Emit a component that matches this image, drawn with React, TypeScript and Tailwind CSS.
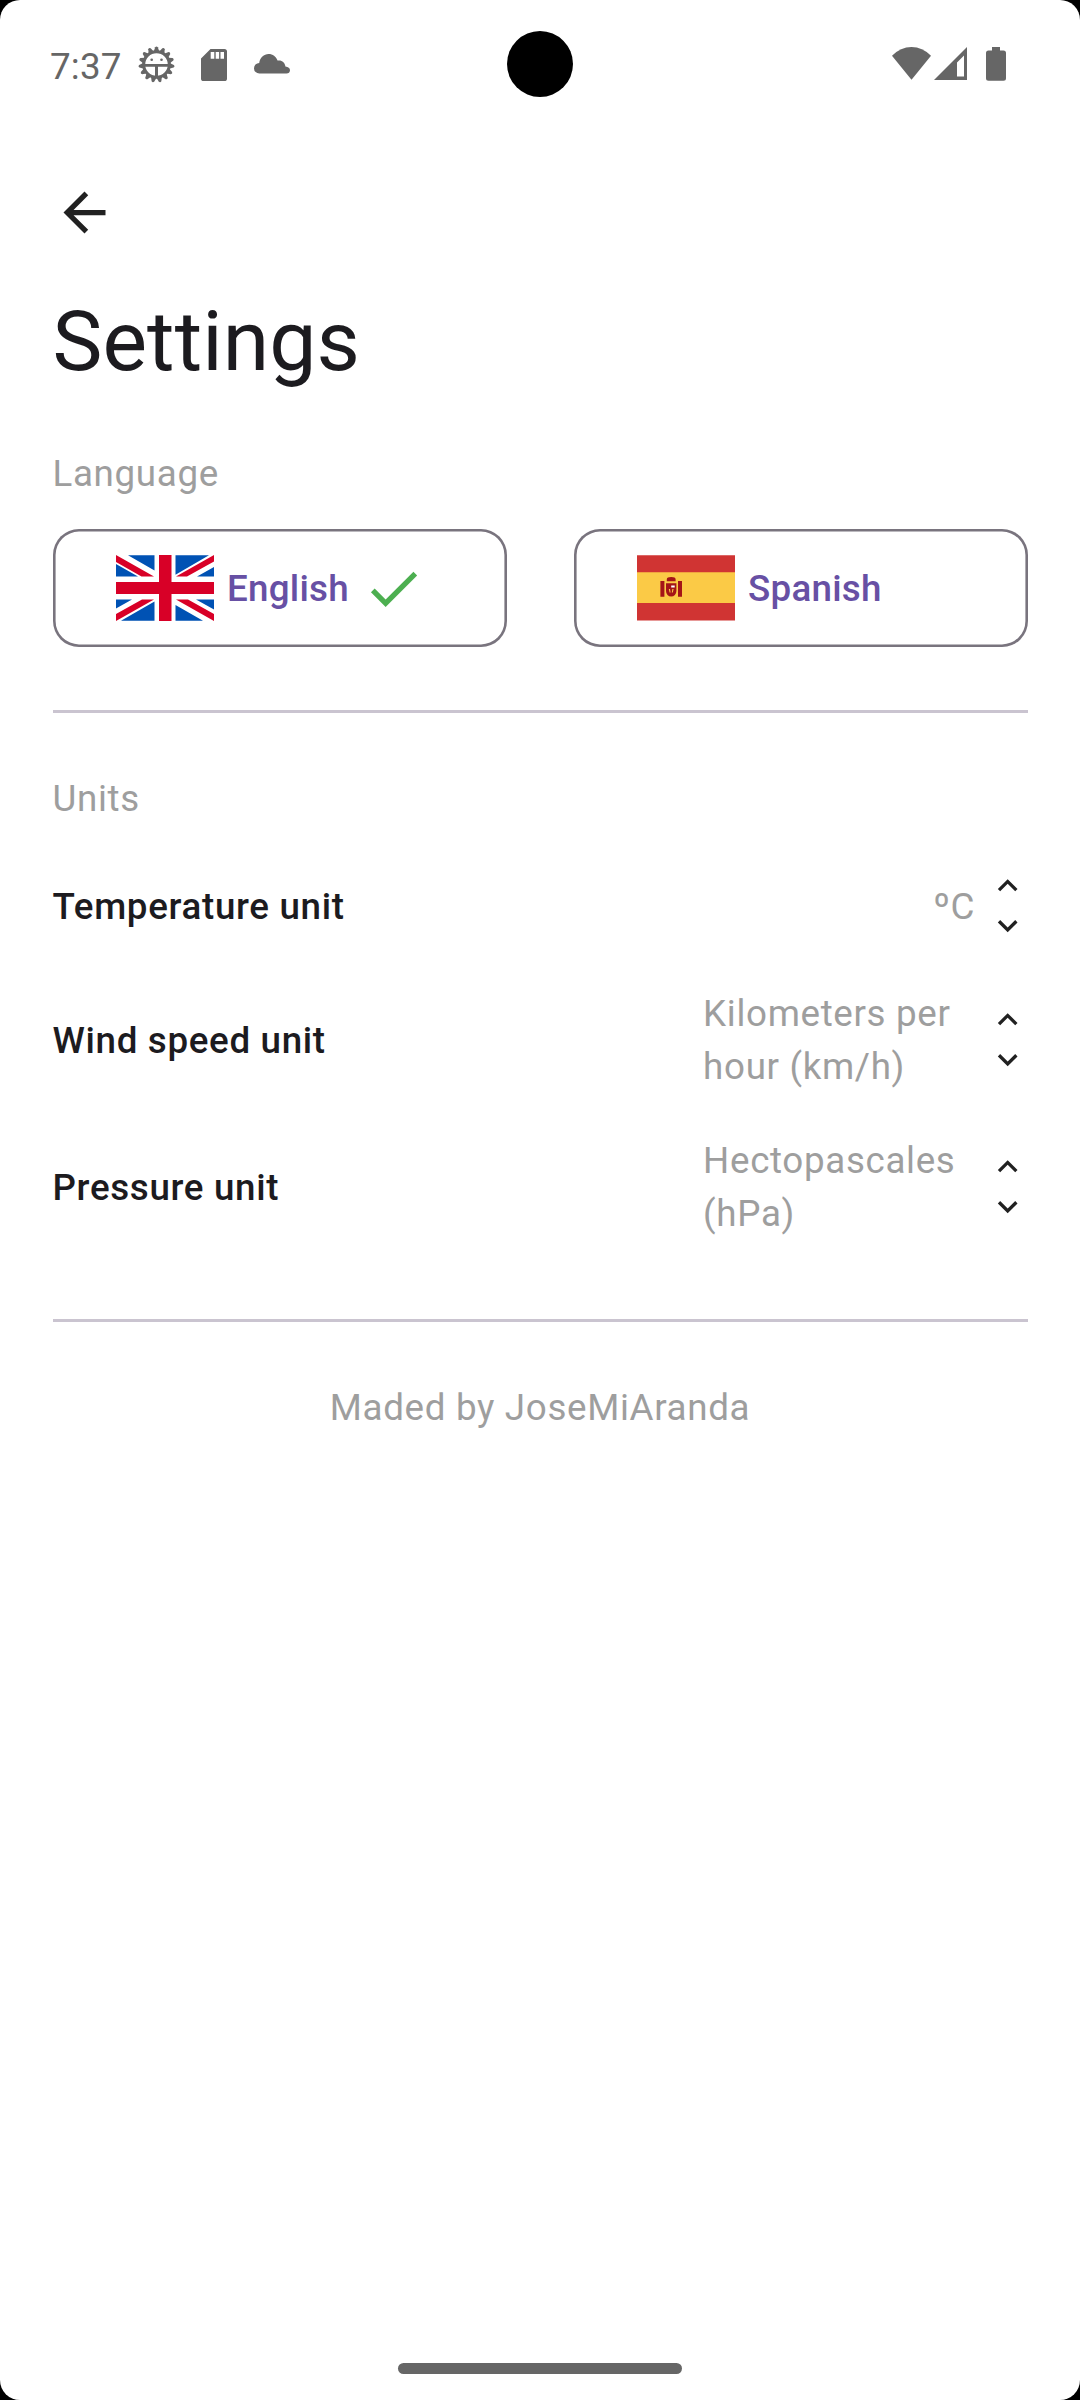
import type { ReactNode } from 'react';

const GREY = '#666666';

function GearIcon() {
  const teeth = Array.from({ length: 15 }, (_, i) => (i * 360) / 15 + 180);
  return (
    <svg className="h-[37px] w-[37px]" viewBox="-18.5 -18.5 37 37" fill={GREY}>
      {teeth.map((a) => (
        <path key={a} d="M-2.8 13L-1.3 17.3Q0 18.8 1.3 17.3L2.8 13z" transform={`rotate(${a})`} />
      ))}
      <circle r="12.8" fill="none" stroke={GREY} strokeWidth="3" />
      <path d="M-12.5 -.6h25v2.8h-25zM-1.5 0h3v12.5h-3z" />
      <circle cx="-4.8" cy="-4.8" r="1.3" />
      <circle cx="5" cy="-4.8" r="1.3" />
    </svg>
  );
}

function StatusBar() {
  return (
    <header className="flex h-[130px] items-start justify-between">
      <div className="flex items-start">
        <span className="ml-[50px] mt-[41px] w-[88px] text-[36.75px] leading-[52.5px] tracking-[0.2px] text-[#666666]">7:37</span>
        <div className="mt-[46px] flex">
          <GearIcon />
          <svg className="ml-[26px] mt-[3px] h-[32px] w-[26px]" viewBox="0 0 26 32" fill={GREY}>
            <path
              fillRule="evenodd"
              d="M9.5 0H23.4A2.6 2.6 0 0 1 26 2.6V29.4A2.6 2.6 0 0 1 23.4 32H2.6A2.6 2.6 0 0 1 0 29.4V9.5zM9.7 3v6.8h3.6V3zM14.7 3v6.8h3.4V3zM19.5 3v6.8h3.5V3z"
            />
          </svg>
          <svg className="ml-[27px] mt-[7.5px] h-[20px] w-[36px]" viewBox="0 0 36 20" fill={GREY}>
            <path d="M5.4 19.6A5.3 5.3 0 0 1 5.2 9C6 3.6 9.8 0 14.6 0C18.8 0 22 2.4 23.5 6.6C27.6 5.7 31 8.4 31.4 12.6C34.3 12.8 36 14.3 36 16.3C36 18.3 34.5 19.6 32.5 19.6z" />
          </svg>
        </div>
      </div>
      <div className="mr-[74px] mt-[47px] flex">
        <svg className="h-[33px] w-[39px]" viewBox="0 0 39 33" fill={GREY}>
          <path d="M19.5 32.8L0 8.8Q8.5 0 19.5 0T39 8.8z" />
        </svg>
        <svg className="ml-[3px] h-[33px] w-[33px]" viewBox="0 0 33 33" fill={GREY}>
          <path fillRule="evenodd" d="M33 0V33H0zM30 8.5L23 15.5V29.5H30z" />
        </svg>
        <svg className="ml-[19px] h-[34px] w-[20px]" viewBox="0 0 20 34" fill={GREY}>
          <path d="M6 0h8v3.5h3.5A2.5 2.5 0 0 1 20 6V31.3A2.5 2.5 0 0 1 17.5 33.8H2.5A2.5 2.5 0 0 1 0 31.3V6A2.5 2.5 0 0 1 2.5 3.5H6z" />
        </svg>
      </div>
    </header>
  );
}

function FlagUK() {
  return (
    <svg className="h-[66px] w-[98px]" viewBox="0 0 98 66">
      <path fill="#fff" d="M0 0H98V66H0z" />
      <path
        fill="#0052b4"
        d="M12 .3H38.5V15.5zM59.5 .3H93L59.5 19.8zM98 12V21.5H81zM0 9L22 21.5H0zM0 44.5H16L0 53.5zM38.5 46.5V65.7H5zM59.5 50L87 65.7H59.5zM80 44.5H98V54.5z"
      />
      <path
        fill="#d80027"
        d="M43 0H55.5V27H98V39H55.5V66H43V39H0V27H43zM0 0L38 21.5H25.5L0 7zM98 0V6.5L71 21.5H60zM0 59L26 44.5H38L0 66zM60 44.5H72L98 59V66z"
      />
    </svg>
  );
}

function FlagSpain() {
  return (
    <svg className="h-[66px] w-[98px]" viewBox="0 0 98 66">
      <path fill="#d03433" d="M0 .3H98V65.4H0z" />
      <path fill="#fbca46" d="M0 17.3H98V48H0z" />
      <path
        fill="#a41517"
        d="M23.4 26h4v15.8h-4zM41 26h4v15.8h-4zM29.8 24.3q0-2.3 4.4-2.3t4.4 2.3v1.9h-8.800zM29 28.300h10.400v7.700a5.200 5.500 0 0 1-10.400 0z"
      />
      <path fill="#fbca46" d="M31.800 34h1.200l.6 3.600h-1zM36.600 34h-1.200l-.6 3.600h1z" />
      <path fill="#fff" d="M34.200 30.500h3.500v2h-3.500z" />
    </svg>
  );
}

function CheckIcon() {
  return (
    <svg className="h-[63px] w-[63px]" viewBox="0 0 24 24" fill="#4caf50">
      <path d="M9 16.17L4.83 12l-1.42 1.41L9 19 21 7l-1.41-1.41z" />
    </svg>
  );
}

function LanguageButton({ flag, label, selected }: { flag: ReactNode; label: string; selected?: boolean }) {
  return (
    <button className="flex h-[118px] w-[454px] items-center rounded-[26px] pl-[63px] shadow-[inset_0_0_0_2.6px_#79747e]">
      {flag}
      <span className="ml-[13.5px] mt-[3px] text-[36.75px] font-medium leading-[52.5px] tracking-[0.26px] text-[#6750a4]">
        {label}
      </span>
      {selected && (
        <span className="ml-[13px]">
          <CheckIcon />
        </span>
      )}
    </button>
  );
}

function Steppers() {
  return (
    <div className="flex w-[39.4px] flex-col">
      <svg className="h-[39.375px] w-[39.375px]" viewBox="0 0 24 24" fill="#212121">
        <path d="M7.41 15.41L12 10.83l4.59 4.58L18 14l-6-6-6 6z" />
      </svg>
      <svg className="h-[39.375px] w-[39.375px]" viewBox="0 0 24 24" fill="#212121">
        <path d="M7.41 8.59L12 13.17l4.59-4.58L18 10l-6 6-6-6z" />
      </svg>
    </div>
  );
}

function UnitRow({ label, lines }: { label: string; lines: string[] }) {
  const wraps = lines.length > 1;
  return (
    <div className="flex items-center justify-between">
      <span className={`font-medium text-[#1c1b1f] ${wraps ? 'pt-[3px]' : 'pt-[2px]'}`}>{label}</span>
      <div className="flex items-center">
        <div className={wraps ? 'w-[285px] translate-y-px' : 'pr-[13px] pt-[2px]'}>
          {lines.map((line) => (
            <p key={line} className="whitespace-nowrap">
              {line}
            </p>
          ))}
        </div>
        <Steppers />
      </div>
    </div>
  );
}

export default function App() {
  return (
    <div className="h-[2400px] w-[1080px] bg-black">
      <div className="relative flex h-full flex-col overflow-hidden rounded-[20px] bg-white font-[Roboto,sans-serif]">
        <div className="absolute left-[507px] top-[31px] h-[66px] w-[66px] rounded-full bg-black" />
        <StatusBar />
        <main className="flex flex-1 flex-col px-[52.5px] pt-[51px] text-[36.75px] leading-[52.5px] tracking-[0.66px] text-[#9e9e9e]">
          <button className="h-[63px] w-[63px]">
            <svg className="h-[63px] w-[63px]" viewBox="0 0 24 24" fill="#212121">
              <path d="M20 11H7.83l5.59-5.59L12 4l-8 8 8 8 1.41-1.41L7.83 13H20v-2z" />
            </svg>
          </button>
          <h1 className="mt-[45px] text-[84px] leading-[105px] tracking-[0.1px] text-[#1c1b1f]">Settings</h1>
          <h2 className="mt-[54px]">Language</h2>
          <div className="mt-[28.5px] flex justify-between">
            <LanguageButton flag={<FlagUK />} label="English" selected />
            <LanguageButton flag={<FlagSpain />} label="Spanish" />
          </div>
          <div className="mt-[63px] h-[2.6px] bg-[#cac4d0]" />
          <h2 className="mt-[60.4px]">Units</h2>
          <div className="mt-[41px] flex flex-col gap-[42px]">
            <UnitRow label="Temperature unit" lines={['ºC']} />
            <UnitRow label="Wind speed unit" lines={['Kilometers per', 'hour (km/h)']} />
            <UnitRow label="Pressure unit" lines={['Hectopascales', '(hPa)']} />
          </div>
          <div className="mt-[80px] h-[2.6px] bg-[#cac4d0]" />
          <p className="mt-[60px] text-center">Maded by JoseMiAranda</p>
        </main>
        <div className="mb-[26px] h-[11px] w-[284px] self-center rounded-full bg-[#666666]" />
      </div>
    </div>
  );
}
